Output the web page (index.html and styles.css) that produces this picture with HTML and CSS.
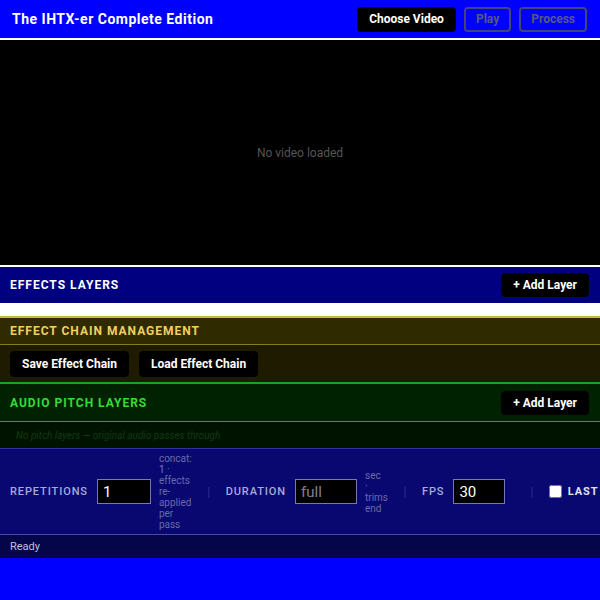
FILE: index.html
```html
<!DOCTYPE html>
<html>
<head>
<meta charset="utf-8">
<link rel="stylesheet" href="styles.css">
</head>
<body>
<div class="app">
  <header class="topbar">
    <h1 class="title">The IHTX-er Complete Edition</h1>
    <div class="top-actions">
      <button class="btn">Choose Video</button>
      <button class="btn btn-disabled">Play</button>
      <button class="btn btn-disabled">Process</button>
    </div>
  </header>
  <div class="video">No video loaded</div>
  <section class="effects">
    <div class="sec-head effects-head">
      <span class="sec-title">Effects Layers</span>
      <button class="btn btn-add">+ Add Layer</button>
    </div>
    <div class="effects-list"></div>
  </section>
  <section class="chain">
    <div class="sec-head chain-head"><span class="sec-title">Effect Chain Management</span></div>
    <div class="chain-body">
      <button class="btn btn-chain">Save Effect Chain</button>
      <button class="btn btn-chain">Load Effect Chain</button>
    </div>
  </section>
  <section class="audio">
    <div class="sec-head audio-head">
      <span class="sec-title">Audio Pitch Layers</span>
      <button class="btn btn-add">+ Add Layer</button>
    </div>
    <div class="audio-empty">No pitch layers — original audio passes through</div>
  </section>
  <section class="settings">
    <div class="field">
      <span class="flabel">Repetitions</span>
      <input class="finput finput-rep" type="text" value="1">
      <span class="hint">concat: <span class="hl">1</span> · effects re-applied per pass</span>
    </div>
    <span class="sep">|</span>
    <div class="field">
      <span class="flabel">Duration</span>
      <input class="finput finput-dur" type="text" placeholder="full">
      <span class="hint">sec <span class="dot">·</span> trims end</span>
    </div>
    <span class="sep">|</span>
    <div class="field field-fps">
      <span class="flabel">FPS</span>
      <input class="finput finput-fps" type="text" value="30">
    </div>
    <span class="sep">|</span>
    <label class="field check">
      <input class="cbox" type="checkbox">
      <span class="flabel flabel-bright">Last Frame</span>
    </label>
  </section>
  <div class="status">Ready</div>
</div>
</body>
</html>
```
FILE: styles.css
```css
* { box-sizing: border-box; }
html, body { margin: 0; padding: 0; }
body {
  background: #0000ff;
  font-family: Roboto, "Liberation Sans", sans-serif;
  color: #fff;
  width: 600px;
  overflow: hidden;
}
.app { display: flex; flex-direction: column; }
.btn {
  font-family: Roboto, "Liberation Sans", sans-serif;
  font-weight: 700;
  font-size: 12px;
  color: #fff;
  background: #000;
  border: 1px solid #000;
  border-radius: 4px;
  padding: 0 11px;
  height: 25px;
  cursor: pointer;
}
.topbar {
  display: flex;
  align-items: center;
  justify-content: space-between;
  padding: 0 13px 0 12px;
  background: #0000ff;
  border-bottom: 2px solid #fff;
  height: 40px;
}
.title {
  margin: 0;
  font-size: 14px;
  font-weight: 700;
  letter-spacing: 0.5px;
}
.top-actions { display: flex; gap: 8px; align-items: center; }
.top-actions .btn { height: 25px; }
.btn-disabled {
  background: transparent;
  border: 2px solid #44447a;
  color: #555a80;
  padding: 0 10px;
}
.video {
  height: 227px;
  background: #000;
  border-bottom: 2px solid #fff;
  display: flex;
  align-items: center;
  justify-content: center;
  color: #555;
  font-size: 12px;
}
.sec-head {
  display: flex;
  align-items: center;
  justify-content: space-between;
  padding: 0 11px 0 10px;
}
.sec-title {
  font-size: 12px;
  font-weight: 700;
  letter-spacing: 1px;
  text-transform: uppercase;
}
.effects-head { height: 36px; background: #000080; }
.effects-list { height: 13px; background: #fff; }
.btn-add { height: 24px; padding: 0 11px; }
.chain { border-top: 2px solid #c8b840; }
.chain-head {
  height: 27px;
  background: #2f2a00;
  border-bottom: 1px solid #8a7a20;
}
.chain-head .sec-title { color: #f0d060; }
.chain-body {
  height: 37px;
  background: #1e1b00;
  display: flex;
  align-items: center;
  gap: 10px;
  padding: 0 10px;
}
.btn-chain { height: 26px; padding: 0 11px; background: #000; }
.audio { border-top: 2px solid #20a020; }
.audio-head {
  height: 38px;
  background: #002200;
  border-bottom: 1px solid #30a030;
}
.audio-head .sec-title { color: #33dd33; }
.audio-empty {
  height: 27px;
  background: #001300;
  color: #103a10;
  font-style: italic;
  font-size: 10px;
  display: flex;
  align-items: center;
  padding: 0 16px;
  border-bottom: 1px solid #3030a0;
}
.settings {
  height: 86px;
  background: #080870;
  display: flex;
  align-items: center;
  padding: 0 10px;
  border-bottom: 1px solid #4848b0;
  overflow: hidden;
  white-space: nowrap;
}
.field { display: flex; align-items: center; flex-shrink: 0; }
.field-fps { margin-right: 9.5px; }
.flabel {
  font-size: 11px;
  font-weight: 500;
  letter-spacing: 0.9px;
  text-transform: uppercase;
  color: #a8a8d8;
}
.flabel-bright { color: #e0e0f0; font-weight: 700; }
.finput {
  height: 25px;
  margin-left: 9px;
  background: #000;
  border: 1px solid #7878b0;
  color: #fff;
  font-family: Roboto, "Liberation Sans", sans-serif;
  font-size: 15px;
  padding: 0 5px;
  border-radius: 0;
}
.finput::placeholder { color: #808090; }
.finput-rep { width: 54px; }
.finput-dur { width: 62px; }
.finput-fps { width: 52px; }
.hint {
  white-space: normal;
  width: min-content;
  font-size: 10px;
  line-height: 11px;
  color: #6a6aa8;
  margin-left: 8px;
}
.hint .hl { color: #7070ff; }
.hint .dot { display: block; }
.sep {
  color: #30309a;
  font-size: 12px;
  margin: 0 15.5px;
}
.check { gap: 3px; }
.cbox { width: 13px; height: 13px; margin: 0 3px 0 0; }
.status {
  height: 23px;
  background: #05054a;
  color: #c0c0d8;
  font-size: 11px;
  display: flex;
  align-items: center;
  padding: 0 10px;
}
```
